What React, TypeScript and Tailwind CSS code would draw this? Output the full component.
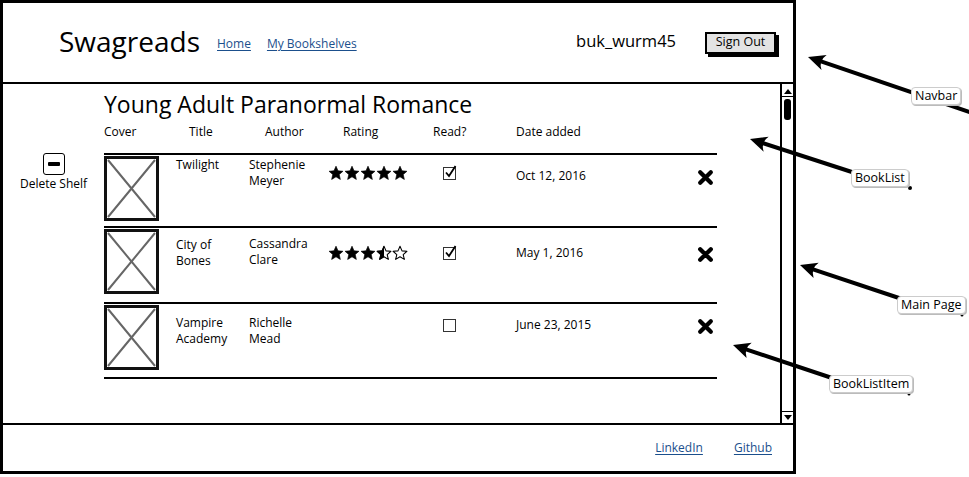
import React from "react";

type Book = {
  title: string[];
  author: string[];
  rating: number | null;
  read: boolean;
  date: string;
};

const books: Book[] = [
  { title: ["Twilight"], author: ["Stephenie", "Meyer"], rating: 5, read: true, date: "Oct 12, 2016" },
  { title: ["City of", "Bones"], author: ["Cassandra", "Clare"], rating: 3.5, read: true, date: "May 1, 2016" },
  { title: ["Vampire", "Academy"], author: ["Richelle", "Mead"], rating: null, read: false, date: "June 23, 2015" },
];

// wireframe rows aren't perfectly aligned, so each row keeps its own offsets
const rowStyle = [
  { h: "h-[73px]", title: "pt-[2px]", author: "pt-[2px]", stars: "pt-[10px]", check: "pt-[12px]", date: "pt-[13px]", x: "pt-[14px]" },
  { h: "h-[76px]", title: "pt-[9px]", author: "pt-[8px]", stars: "pt-[17px]", check: "pt-[19px]", date: "pt-[17px]", x: "pt-[18px]" },
  { h: "h-[77px] border-b-2", title: "pt-[11px]", author: "pt-[11px]", stars: "pt-[17px]", check: "pt-[15px]", date: "pt-[13px]", x: "pt-[14px]" },
];

const STAR = "M12 1.8l3 7 7.4.6-5.6 4.9 1.7 7.3L12 17.7l-6.5 3.9 1.7-7.3L1.6 9.4 9 8.8z";

const Star = ({ kind }: { kind: "full" | "half" | "empty" }) => (
  <div className="relative w-[16px] h-[16px]">
    <svg viewBox="0 0 24 24" className="absolute inset-0 w-[16px] h-[16px]">
      <path d={STAR} fill={kind === "full" ? "#000" : "none"} stroke="#000" strokeWidth={kind === "full" ? 1 : 1.6} strokeLinejoin="round" />
    </svg>
    {kind === "half" && (
      <div className="absolute left-0 top-0 h-[16px] w-[8px] overflow-hidden">
        <svg viewBox="0 0 24 24" className="w-[16px] h-[16px]">
          <path d={STAR} fill="#000" stroke="#000" strokeWidth={1} />
        </svg>
      </div>
    )}
  </div>
);

const Stars = ({ rating }: { rating: number }) => (
  <div className="flex">
    {[1, 2, 3, 4, 5].map((i) => (
      <Star key={i} kind={rating >= i ? "full" : rating >= i - 0.5 ? "half" : "empty"} />
    ))}
  </div>
);

const CheckBox = ({ checked }: { checked: boolean }) => (
  <div className="relative w-[13px] h-[13px] border-[1.5px] border-[#333] bg-white">
    {checked && (
      <svg viewBox="0 0 13 13" className="absolute -top-[3px] left-0 w-[13px] h-[13px]">
        <path d="M2 7.5l3 3.5L11.5 1" fill="none" stroke="#000" strokeWidth="1.8" />
      </svg>
    )}
  </div>
);

const Cover = () => (
  <div className="w-[55px] h-[65px] border-[3px] border-[#111] bg-white">
    <svg viewBox="0 0 49 59" className="w-full h-full">
      <path d="M1 1L48 58M48 1L1 58" stroke="#666" strokeWidth="2" />
    </svg>
  </div>
);

const RemoveIcon = () => (
  <svg viewBox="0 0 16 16" className="w-[17px] h-[17px]">
    <path d="M3 3L13 13M13 3L3 13" stroke="#000" strokeWidth="4" strokeLinecap="round" />
  </svg>
);

const BookListItem = ({ book, idx }: { book: Book; idx: number }) => {
  const s = rowStyle[idx];
  return (
    <div className={`grid grid-cols-[72px_73px_79px_115px_73px_181px_20px] border-t-2 border-black ${s.h}`}>
      <div className="pt-[1px]">
        <Cover />
      </div>
      <div className={`${s.title} text-[12px] leading-[16px]`}>
        {book.title.map((t) => (
          <div key={t}>{t}</div>
        ))}
      </div>
      <div className={`${s.author} text-[12px] leading-[16px]`}>
        {book.author.map((t) => (
          <div key={t}>{t}</div>
        ))}
      </div>
      <div className={s.stars}>{book.rating !== null && <Stars rating={book.rating} />}</div>
      <div className={s.check}>
        <CheckBox checked={book.read} />
      </div>
      <div className={`${s.date} text-[12px] leading-[16px]`}>{book.date}</div>
      <div className={s.x}>
        <RemoveIcon />
      </div>
    </div>
  );
};

const Label = ({ text, className }: { text: string; className: string }) => (
  <div className={`absolute px-[3px] h-[18px] leading-[16px] text-[12.5px] bg-white border border-[#ccc] rounded-[4px] shadow-[1px_1px_0_#bbb] ${className}`}>
    {text}
  </div>
);

const Arrow = ({ x1, y1, x2, y2 }: { x1: number; y1: number; x2: number; y2: number }) => {
  const a = Math.atan2(y2 - y1, x2 - x1);
  const L = 17;
  const W = 8;
  const bx = x2 - Math.cos(a) * L;
  const by = y2 - Math.sin(a) * L;
  const px = -Math.sin(a) * W;
  const py = Math.cos(a) * W;
  return (
    <g>
      <line x1={x1} y1={y1} x2={bx + Math.cos(a) * 4} y2={by + Math.sin(a) * 4} stroke="#000" strokeWidth="4" />
      <path d={`M${x2} ${y2} L${bx + px} ${by + py} Q${bx + Math.cos(a) * 6} ${by + Math.sin(a) * 6} ${bx - px} ${by - py} Z`} fill="#000" />
    </g>
  );
};

export default function App() {
  return (
    <div className="relative w-[969px] h-[477px] bg-white overflow-hidden font-['Open_Sans',sans-serif] text-black">
      <div className="w-[796px] h-[474px] flex flex-col">
        {/* Navbar */}
        <div className="h-[84px] border-[3px] border-b-[2px] border-black flex items-center pl-[56px] pr-[17px]">
          <div className="text-[28px] leading-none pb-[3px]">Swagreads</div>
          <a className="ml-[17px] mt-[3px] text-[12px] text-[#1b4f8c] underline underline-offset-2">Home</a>
          <a className="ml-[16px] mt-[3px] text-[12px] text-[#1b4f8c] underline underline-offset-2">My Bookshelves</a>
          <div className="ml-auto text-[16.5px] pb-[2px]">buk_wurm45</div>
          <button className="ml-[29px] w-[71px] h-[22px] bg-[#e3e3e3] border-2 border-black text-[12.5px] leading-none shadow-[3px_3px_0_#000]">
            Sign Out
          </button>
        </div>

        {/* Main page */}
        <div className="h-[339px] border-x-[3px] border-black flex">
          <div className="w-[101px] pt-[69px] flex flex-col items-center">
            <div className="w-[22px] h-[22px] border-[1.5px] border-black rounded-[3px] flex items-center justify-center">
              <div className="w-[12px] h-[4px] bg-black rounded-[1px]" />
            </div>
            <div className="text-[12px] leading-[16px] mt-[1px]">Delete Shelf</div>
          </div>

          <div className="w-[613px] pt-[6px]">
            <div className="text-[23px] leading-[28px]">Young Adult Paranormal Romance</div>
            <div className="grid grid-cols-[85px_76px_78px_90px_83px_1fr] text-[12px] leading-[16px] mt-[6px] h-[24px]">
              <div>Cover</div>
              <div>Title</div>
              <div>Author</div>
              <div>Rating</div>
              <div>Read?</div>
              <div>Date added</div>
            </div>
            <div className="mt-[5px]">
              {books.map((b, i) => (
                <BookListItem key={i} book={b} idx={i} />
              ))}
            </div>
          </div>

          {/* scrollbar */}
          <div className="ml-auto w-[13px] border-l-2 border-black flex flex-col pt-[2px]">
            <div className="h-[11px] border-b-[1.5px] border-black flex items-center justify-center">
              <div className="w-0 h-0 border-x-[4px] border-x-transparent border-b-[5px] border-b-black" />
            </div>
            <div className="mx-auto mt-[2px] w-[7px] h-[21px] bg-black rounded-[3px]" />
            <div className="flex-1" />
            <div className="h-[12px] border-t-[1.5px] border-black flex items-center justify-center">
              <div className="w-0 h-0 border-x-[4px] border-x-transparent border-t-[5px] border-t-black" />
            </div>
          </div>
        </div>

        {/* Footer */}
        <div className="h-[51px] border-[3px] border-t-[2px] border-black flex items-center justify-end pr-[21px] gap-[31px] text-[12px] text-[#1b4f8c]">
          <a className="underline underline-offset-2">LinkedIn</a>
          <a className="underline underline-offset-2">Github</a>
        </div>
      </div>

      {/* Annotations */}
      <svg className="absolute inset-0 pointer-events-none" width="969" height="477">
        <Arrow x1={975} y1={114} x2={808} y2={57} />
        <Arrow x1={858} y1={174} x2={750} y2={139} />
        <Arrow x1={905} y1={300} x2={800} y2={265} />
        <Arrow x1={838} y1={380} x2={733} y2={345} />
        <circle cx={910} cy={188} r={2} fill="#000" />
        <circle cx={962} cy={315} r={1.5} fill="#000" />
        <circle cx={909} cy={394} r={1.5} fill="#000" />
      </svg>
      <Label text="Navbar" className="left-[911px] top-[87px]" />
      <Label text="BookList" className="left-[851px] top-[169px]" />
      <Label text="Main Page" className="left-[897px] top-[296px]" />
      <Label text="BookListItem" className="left-[829px] top-[375px]" />
    </div>
  );
}
